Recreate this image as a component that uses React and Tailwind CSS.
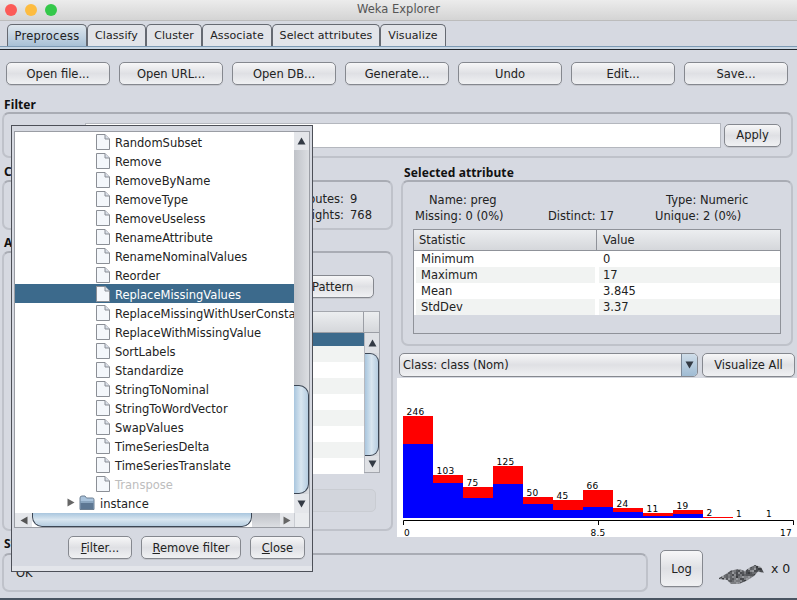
import React from "react";

const font = { fontFamily: '"DejaVu Sans", sans-serif' };

const Btn = ({ className = "", children }) => (
  <div className={"flex items-center justify-center rounded-[5px] border border-[#85888f] bg-linear-to-b from-[#f7f7f8] via-[#dfe0e4] to-[#f0f1f3] pt-[2px] text-[#222] shadow-[0_1px_0_#c4c6cc] " + className}>
    {children}
  </div>
);

const Panel = ({ className = "", children }) => (
  <div className={"rounded-[7px] border-2 border-[#bfc2ca] border-t-[#a9acb4] bg-[#d6d9e1] " + className}>{children}</div>
);

const Label = ({ className = "", children }) => (
  <div className={"font-['Noto_Sans'] text-[12px] font-bold leading-[14px] tracking-[0.1px] text-[#111] " + className}>{children}</div>
);

const Up = () => <svg width="9" height="8" viewBox="0 0 9 8"><path d="M4.5 0.5 L8.5 7.5 L0.5 7.5 Z" fill="#333a44" /></svg>;
const Down = () => <svg width="9" height="8" viewBox="0 0 9 8"><path d="M0.5 0.5 L8.5 0.5 L4.5 7.5 Z" fill="#333a44" /></svg>;
const Left = () => <svg width="8" height="9" viewBox="0 0 8 9"><path d="M0.5 4.5 L7.5 0.5 L7.5 8.5 Z" fill="#555" /></svg>;
const Right = () => <svg width="8" height="9" viewBox="0 0 8 9"><path d="M7.5 4.5 L0.5 0.5 L0.5 8.5 Z" fill="#666" /></svg>;

const FileIcon = () => (
  <svg width="14" height="16" viewBox="0 0 14 16" className="block shrink-0">
    <path d="M0.5 0.5 H9 L13.5 5 V15.5 H0.5 Z" fill="#f4f7fb" stroke="#8b8f96" />
    <path d="M9 0.5 V5 H13.5" fill="#d9dfe8" stroke="#8b8f96" />
  </svg>
);

const FolderIcon = () => (
  <svg width="16" height="16" viewBox="0 0 16 16" className="block shrink-0">
    <path d="M1 3 Q1 1 3 1 H6 L7.5 3 H13.5 Q15 3 15 4.5 V14.5 H1 Z" fill="#a9c3dc" stroke="#6d7f92" />
    <path d="M1.5 6 H14.5 V14 H1.5 Z" fill="#5d7793" />
    <path d="M1.5 6 H14.5 V8 H1.5 Z" fill="#8ba6c0" />
  </svg>
);

const filters = [
  "RandomSubset", "Remove", "RemoveByName", "RemoveType", "RemoveUseless", "RenameAttribute",
  "RenameNominalValues", "Reorder", "ReplaceMissingValues", "ReplaceMissingWithUserConstant",
  "ReplaceWithMissingValue", "SortLabels", "Standardize", "StringToNominal", "StringToWordVector",
  "SwapValues", "TimeSeriesDelta", "TimeSeriesTranslate", "Transpose",
];

const tabs = [
  ["Preprocess", "w-[80px] text-[11.5px] tracking-[0.25px]"], ["Classify", "w-[59px] text-[11px] tracking-[0.1px]"], ["Cluster", "w-[56px] text-[11px] tracking-[0.1px]"],
  ["Associate", "w-[70px] text-[11px] tracking-[0.1px]"], ["Select attributes", "w-[108px] text-[11px] tracking-[0.1px]"], ["Visualize", "w-[66px] text-[11px] tracking-[0.1px]"],
];

const topButtons = ["Open file...", "Open URL...", "Open DB...", "Generate...", "Undo", "Edit...", "Save..."];

const stats = [["Minimum", "0"], ["Maximum", "17"], ["Mean", "3.845"], ["StdDev", "3.37"]];
const attrs = ["preg", "plas", "pres", "skin", "insu", "mass", "pedi", "age"];

const bars = [
  [416, 444, 246], [475, 483, 103], [487, 498, 75], [466, 484, 125], [497, 504, 50], [500, 510, 45],
  [490, 507, 66], [508, 512, 24], [513, 516, 11], [510, 514, 19], [517, 518, 2],
];

const Histogram = () => (
  <svg width="400" height="159" viewBox="397 378 400 159" className="block">
    {bars.map(([r, b, n], i) => (
      <g key={i}>
        <rect x={403 + i * 30} y={r} width="30" height={518 - r} fill="#ff0000" />
        <rect x={403 + i * 30} y={b} width="30" height={518 - b} fill="#0000ff" />
        <text x={406.5 + i * 30} y={r - 1} fontSize="9" fill="#000" style={font} letterSpacing="0.3">{n}</text>
      </g>
    ))}
    <text x="736" y="517" fontSize="9" fill="#000" style={font}>1</text>
    <text x="766" y="517" fontSize="9" fill="#000" style={font}>1</text>
    <path d="M403.5 525 V520.5 H793.5 V525 M598.5 520.5 V525" fill="none" stroke="#000" />
    <text x="404" y="535.5" fontSize="9" fill="#000" style={font}>0</text>
    <text x="598" y="535.5" textAnchor="middle" fontSize="9" fill="#000" style={font} letterSpacing="0.3">8.5</text>
    <text x="792" y="535.5" textAnchor="end" fontSize="9" fill="#000" style={font} letterSpacing="0.3">17</text>
  </svg>
);

const birdShape = "M4 18 L10 14.5 L16 10.5 L24 9 L30 11 L34 8 L40 5 L46 7 L49 13 L43 11.5 L39 16 L32 20.5 L24 24 L16 24 L12 20 L4 19 Z";
const shades = ["#4a4c50", "#6a6c70", "#7d7f83", "#55575b", "#989a9e", "#3a3c3f", "#77797d", "#606266", "#8a8c90"];
const speckles = [];
for (let y = 4; y < 26; y += 2) {
  for (let x = 3; x < 50; x += 2) {
    const h = (x * x * 31 + y * y * 17 + x * y * 5 + 11) % 97;
    speckles.push([x, y, shades[h % shades.length]]);
  }
}

const Bird = () => (
  <svg width="55" height="30" viewBox="0 0 55 30">
    <defs>
      <clipPath id="bird-clip"><path d={birdShape} /></clipPath>
    </defs>
    <g clipPath="url(#bird-clip)">
      {speckles.map(([x, y, c]) => <rect key={x + "-" + y} x={x} y={y} width="2" height="2" fill={c} />)}
    </g>
  </svg>
);

export default function App() {
  return (
    <div style={font} className="relative flex h-[600px] w-[797px] flex-col overflow-hidden bg-[#d6d9e1] text-[11.5px] text-[#222]">
      {/* title bar */}
      <div className="relative flex h-[21px] shrink-0 items-center justify-center border-b border-[#bcbcbc] bg-linear-to-b from-[#ececec] to-[#d4d4d4] text-[11.5px] text-[#555]">
        <div className="absolute left-[5px] top-[4px] flex gap-[8px]">
          <div className="h-[12px] w-[12px] rounded-full bg-[#fc5b57]" />
          <div className="h-[12px] w-[12px] rounded-full bg-[#fdbc40]" />
          <div className="h-[12px] w-[12px] rounded-full bg-[#34c84a]" />
        </div>
        Weka Explorer
      </div>

      {/* tabs */}
      <div className="mt-[3px] flex h-[22px] shrink-0 pl-[7px]">
        {tabs.map(([t, w], i) => (
          <div key={t} className={"flex items-center justify-center rounded-t-[5px] border border-b-0 border-[#666a72] pt-[2px] " + w + " " + (i === 0 ? "bg-linear-to-b from-[#dfe7ee] to-[#a9c1d6]" : "bg-[#e2e4e9]")}>
            {t}
          </div>
        ))}
      </div>
      <div className="h-[4px] shrink-0 border-t border-b border-t-[#7d9ab4] border-b-[#22262c] bg-[#c8d6e3]" />

      {/* top buttons */}
      <div className="ml-[6px] mt-[12px] flex h-[23px] shrink-0 gap-[9px]">
        {topButtons.map((b) => <Btn key={b} className="w-[104px]">{b}</Btn>)}
      </div>

      {/* filter */}
      <Label className="ml-[4px] mt-[13px] shrink-0">Filter</Label>
      <Panel className="ml-[2px] flex h-[46px] w-[791px] shrink-0 items-center pl-[8px] pr-[10px]">
        <Btn className="h-[20px] w-[70px]">Choose</Btn>
        <div className="ml-[3px] mr-[3px] mt-[1px] h-[25px] flex-1 border border-[#b4b7be] bg-white" />
        <Btn className="h-[23px] w-[57px]">Apply</Btn>
      </Panel>

      {/* main columns */}
      <div className="flex min-h-0 flex-1">
        {/* left */}
        <div className="ml-[2px] flex w-[391px] shrink-0 flex-col">
          <Label className="ml-[2px] mt-[7px]">Current relation</Label>
          <Panel className="mt-[1px] grid h-[50px] grid-cols-[150px_1fr_41px] content-center pl-[12px] pt-[4px] leading-[16px]">
            <div>Relation: pima</div>
            <div className="pr-[6px] text-right">Attributes:</div>
            <div>9</div>
            <div>Instances: 768</div>
            <div className="pr-[6px] text-right">Sum of weights:</div>
            <div>768</div>
          </Panel>
          <Label className="ml-[2px] mt-[6px]">Attributes</Label>
          <Panel className="mt-[1px] flex h-[280px] flex-col pl-[10px] pr-[11px] pt-[22px]">
            <div className="mr-[6px] flex h-[23px] gap-[8px]">
              <Btn className="w-[84px]">All</Btn>
              <Btn className="w-[84px]">None</Btn>
              <Btn className="w-[84px]">Invert</Btn>
              <Btn className="flex-1 !justify-start pl-[21px]">Pattern</Btn>
            </div>
            <div className="mt-[13px] flex h-[162px] flex-col border border-[#a4a7ae] bg-white">
              <div className="flex h-[21px] shrink-0 border-b border-[#9b9ea5] bg-linear-to-b from-[#eceef0] to-[#d5d7db]">
                <div className="w-[40px] border-r border-[#9b9ea5] pl-[6px]">No.</div>
                <div className="flex-1 border-r border-[#9b9ea5] pl-[6px]">Name</div>
                <div className="w-[15px]" />
              </div>
              <div className="flex min-h-0 flex-1">
                <div className="min-w-0 flex-1">
                  <div className="h-[13px] bg-[#3c6a8c]" />
                  {attrs.map((a, i) => (
                    <div key={a} className={"flex h-[16px] items-center pl-[10px] leading-none " + (i % 2 === 0 ? "bg-[#f1f3f2]" : "bg-white")}>
                      <span className="w-[38px]">{i + 2}</span>{a}
                    </div>
                  ))}
                </div>
                <div className="flex w-[15px] shrink-0 flex-col border-l border-[#b5b8bf] bg-linear-to-r from-[#bfc2c8] to-[#dcdee2]">
                  <div className="flex h-[20px] shrink-0 items-center justify-center bg-[#dfe1e5]"><Up /></div>
                  <div className="h-[103px] shrink-0 rounded-r-[9px] border-y border-r border-[#3c4654] bg-linear-to-r from-[#a9c6de] via-[#d9e6f0] to-[#b6cde0]" />
                  <div className="flex flex-1 items-center justify-center bg-[#dfe1e5]"><Down /></div>
                </div>
              </div>
            </div>
            <Btn className="mr-[4px] mt-[16px] h-[23px] !border-[#c9ccd2] !bg-none bg-[#d2d5dc] !shadow-none text-[#aaa]">Remove</Btn>
          </Panel>
          <Label className="ml-[2px] mt-[6px]">Status</Label>
        </div>

        {/* right */}
        <div className="ml-[4px] flex min-w-0 flex-1 flex-col">
          <Label className="ml-[7px] mt-[8px]">Selected attribute</Label>
          <Panel className="mx-[4px] flex h-[166px] flex-col px-[10px] pt-[10px]">
            <div className="grid h-[32px] grid-cols-[133px_107px_1fr] pl-[2px] leading-[16px]">
              <div className="pl-[14px]">Name: preg</div>
              <div />
              <div className="pl-[11px]">Type: Numeric</div>
              <div>Missing: 0 (0%)</div>
              <div>Distinct: 17</div>
              <div>Unique: 2 (0%)</div>
            </div>
            <div className="mt-[5px] flex h-[105px] flex-col border border-[#8f9299] bg-[#d6d9e1]">
              <div className="flex h-[21px] shrink-0 border-b border-[#8f9299] bg-linear-to-b from-[#eceef0] to-[#d5d7db]">
                <div className="flex w-[183px] items-center border-r border-[#8f9299] pl-[5px] pt-[2px]">Statistic</div>
                <div className="flex flex-1 items-center pl-[6px] pt-[2px]">Value</div>
              </div>
              {stats.map(([k, v], i) => (
                <div key={k} className="flex h-[16px] bg-white leading-none">
                  <div className={"ml-[2px] flex w-[179px] items-center pl-[5px] pt-[2px] " + (i % 2 ? "bg-[#f1f3f2]" : "bg-white")}>{k}</div>
                  <div className={"ml-[4px] flex flex-1 items-center pl-[4px] pt-[2px] " + (i % 2 ? "bg-[#f1f3f2]" : "bg-white")}>{v}</div>
                </div>
              ))}
            </div>
          </Panel>
          <div className="ml-[2px] mt-[7px] flex h-[24px] gap-[4px]">
            <div className="flex w-[299px] overflow-hidden rounded-[5px] border border-[#85888f] bg-linear-to-b from-[#f7f7f8] via-[#dfe0e4] to-[#f0f1f3]">
              <div className="flex flex-1 items-center pl-[3px] pt-[2px]">Class: class (Nom)</div>
              <div className="flex w-[16px] items-center justify-center border-l border-[#7d8a99] bg-linear-to-b from-[#cfdde9] to-[#9fbbd3]"><Down /></div>
            </div>
            <Btn className="w-[93px]">Visualize All</Btn>
          </div>
          <div className="mt-[1px] h-[159px] bg-white"><Histogram /></div>
        </div>
      </div>

      {/* status */}
      <div className="absolute left-[2px] top-[553px] flex h-[39px] w-[646px] items-center rounded-[7px] border-2 border-[#bfc2ca] border-t-[#a9acb4] pl-[12px] pt-[3px]">OK</div>
      <Btn className="absolute left-[660px] top-[550px] h-[37px] w-[43px]">Log</Btn>
      <div className="absolute left-[715px] top-[560px]"><Bird /></div>
      <div className="absolute left-[771px] top-[560px] text-[12.5px]">x 0</div>
      <div className="absolute bottom-0 left-0 h-[2px] w-full bg-[#4a5562]" />

      {/* filter popup */}
      <div className="absolute left-[11px] top-[125px] flex h-[447px] w-[302px] flex-col border border-[#4d5058] bg-[#d6d9e1] px-[2px] pt-[5px]">
        <div className="flex h-[397px] shrink-0 flex-col border border-[#9a9da4] bg-white">
          <div className="flex min-h-0 flex-1">
            <div className="min-w-0 flex-1 overflow-hidden">
              {filters.map((f) => (
                <div key={f} className={"flex h-[19px] items-center gap-[5px] whitespace-nowrap pl-[81px] " + (f === "ReplaceMissingValues" ? "bg-[#3c6a8c] text-white" : f === "Transpose" ? "text-[#bdbdbd]" : "text-[#222]")}>
                  <span className="pt-[1px]"><FileIcon /></span>
                  <span className="pt-[3px] leading-[14px]">{f}</span>
                </div>
              ))}
              <div className="flex h-[19px] items-center pl-[52px]">
                <Right />
                <span className="ml-[4px]"><FolderIcon /></span>
                <span className="ml-[5px] pt-[3px] leading-[14px]">instance</span>
              </div>
            </div>
            <div className="flex w-[15px] shrink-0 flex-col bg-linear-to-r from-[#bfc2c8] to-[#dcdee2]">
              <div className="flex h-[18px] shrink-0 items-center justify-center bg-[#e4e6ea]"><Up /></div>
              <div className="h-[235px] shrink-0" />
              <div className="h-[109px] shrink-0 rounded-r-[10px] border-y border-r border-[#3c4654] bg-linear-to-r from-[#a9c6de] via-[#d9e6f0] to-[#b6cde0]" />
              <div className="flex flex-1 items-center justify-center bg-[#e4e6ea]"><Down /></div>
            </div>
          </div>
          <div className="flex h-[14px] shrink-0">
            <div className="flex w-[17px] shrink-0 items-center justify-center bg-[#e4e6ea]"><Left /></div>
            <div className="h-full w-[220px] shrink-0 rounded-b-[10px] border-x border-b border-[#3c4654] bg-linear-to-b from-[#a9c6de] via-[#d9e6f0] to-[#b6cde0]" />
            <div className="flex-1 bg-linear-to-b from-[#bfc2c8] to-[#dcdee2]" />
            <div className="flex w-[14px] shrink-0 items-center justify-center bg-[#e4e6ea]"><Right /></div>
            <div className="w-[15px] shrink-0 border-l border-[#c9ccd2] bg-[#e9ebee]" />
          </div>
        </div>
        <div className="mt-[8px] flex h-[23px] shrink-0 justify-end gap-[9px] pr-[5px]">
          <Btn className="w-[64px]"><span><u>F</u>ilter...</span></Btn>
          <Btn className="w-[100px]"><span><u>R</u>emove filter</span></Btn>
          <Btn className="w-[55px]"><span><u>C</u>lose</span></Btn>
        </div>
        <div className="-mx-[2px] mt-auto h-[5px] shrink-0 bg-[#e3e5ea]" />
      </div>
    </div>
  );
}
